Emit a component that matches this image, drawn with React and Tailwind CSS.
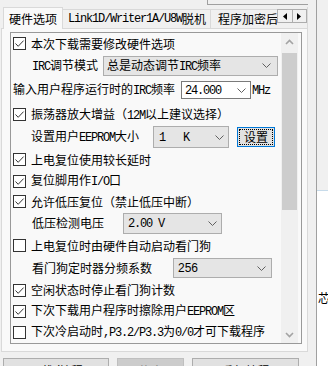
import React from 'react';

const cjk = "font-['Noto_Sans_CJK_SC',sans-serif]";

function L({ children }) {
  return <span className="font-['Liberation_Mono',monospace] tracking-[-1.2px]">{children}</span>;
}

function Check({ checked }) {
  return (
    <span className="flex h-[13px] w-[13px] shrink-0 items-center justify-center border border-[#333333] bg-white">
      {checked ? (
        <svg width="11" height="11" viewBox="0 0 11 11">
          <path d="M1.5 5.5 L4.2 8.3 L9.6 2.6" fill="none" stroke="#333333" strokeWidth="1" />
        </svg>
      ) : null}
    </span>
  );
}

function Chevron({ color = '#606060' }) {
  return (
    <svg width="9" height="5" viewBox="0 0 9 5" className="shrink-0">
      <path d="M0.5 0.5 L4.5 4.5 L8.5 0.5" fill="none" stroke={color} strokeWidth="1" />
    </svg>
  );
}

function CheckRow({ h, checked, children }) {
  return (
    <div className={`flex shrink-0 items-center gap-[5px] pl-[2px] ${h}`}>
      <Check checked={checked} />
      <span className="whitespace-nowrap leading-[14px]">{children}</span>
    </div>
  );
}

function Scrollbar() {
  return (
    <div className="flex w-[17px] shrink-0 flex-col bg-[#f0f0f0]">
      <div className="flex h-[17px] shrink-0 items-center justify-center">
        <svg width="9" height="6" viewBox="0 0 9 6">
          <path d="M1 5 L4.5 1.5 L8 5" fill="none" stroke="#a3a3a3" strokeWidth="1.6" />
        </svg>
      </div>
      <div className="mx-[1px] mt-[3px] h-[157px] shrink-0 bg-[#cdcdcd]" />
      <div className="flex-1" />
      <div className="flex h-[17px] shrink-0 items-center justify-center">
        <svg width="9" height="6" viewBox="0 0 9 6">
          <path d="M1 1 L4.5 4.5 L8 1" fill="none" stroke="#a3a3a3" strokeWidth="1.6" />
        </svg>
      </div>
    </div>
  );
}

export default function App() {
  return (
    <div className={`flex h-[366px] w-[328px] overflow-hidden bg-[#f0f0f0] text-[12px] text-black ${cjk}`}>
      <div className="flex w-[308px] shrink-0 flex-col">
        <div className="h-[7px] shrink-0">
          <div className="ml-[207px] h-[5px] w-[101px] border-b border-l border-[#a0a0a0]" />
        </div>

        {/* tab headers */}
        <div className="flex h-[22px] shrink-0 items-end pl-[1px]">
          <div className="h-[1px] w-[2px] bg-[#d9d9d9]" />
          <div className="flex h-[22px] w-[60px] items-center justify-center border-x border-t border-[#d9d9d9] bg-[#f9f9f9] leading-[14px]">
            硬件选项
          </div>
          <div className="flex h-[20px] w-[214px] overflow-hidden border-b border-[#d9d9d9]">
            <div className="flex h-full w-[148px] shrink-0 items-center border-r border-t border-[#d9d9d9] pl-[5px] whitespace-nowrap leading-[14px]">
              <L>Link1D/Writer1A/U8W</L>脱机
            </div>
            <div className="flex h-full w-[70px] shrink-0 items-center border-r border-t border-[#d9d9d9] pl-[7px] whitespace-nowrap leading-[14px]">
              程序加密后
            </div>
          </div>
          <div className="flex h-[22px] w-[31px] flex-col border-b border-r border-[#d9d9d9]">
            <div className="mt-[2px] flex">
              <div className="flex h-[14px] w-[16px] items-center justify-center border border-[#adadad] bg-[#f0f0f0]">
                <svg width="4" height="7" viewBox="0 0 4 7"><path d="M4 0 L0 3.5 L4 7 Z" fill="#000" /></svg>
              </div>
              <div className="flex h-[14px] w-[15px] items-center justify-center border-y border-r border-[#adadad] bg-[#f0f0f0]">
                <svg width="4" height="7" viewBox="0 0 4 7"><path d="M0 0 L4 3.5 L0 7 Z" fill="#000" /></svg>
              </div>
            </div>
          </div>
        </div>

        {/* tab page */}
        <div className="ml-[1px] h-[323px] w-[307px] shrink-0 border-x border-b border-[#d9d9d9] bg-[#f9f9f9] pl-[8px] pt-[3px]">
          <div className="flex h-[312px] w-[292px] border border-[#999999]">
            <div className="flex w-[270px] shrink-0 flex-col">
              <CheckRow h="h-[21px]" checked>本次下载需要修改硬件选项</CheckRow>

              <div className="flex h-[23px] shrink-0 items-center pl-[21px]">
                <span className="w-[71px] shrink-0 whitespace-nowrap leading-[14px]">
                  <L>IRC</L>调节模式
                </span>
                <div className="flex h-[20px] w-[175px] items-center justify-between border border-[#adadad] bg-[#e5e5e5] pl-[3px] pr-[6px]">
                  <span className="whitespace-nowrap leading-[14px]">
                    总是动态调节<L>IRC</L>频率
                  </span>
                  <Chevron />
                </div>
              </div>

              <div className="flex h-[26px] shrink-0 items-center pl-[2px]">
                <span className="w-[168px] shrink-0 whitespace-nowrap leading-[14px]">
                  输入用户程序运行时的<L>IRC</L>频率
                </span>
                <div className="flex h-[18px] w-[70px] items-center justify-between border border-[#7a7a7a] bg-white pl-[3px] pr-[4px]">
                  <span className="leading-[14px]"><L>24.000</L></span>
                  <Chevron />
                </div>
                <span className="ml-[1px] leading-[14px]"><L>MHz</L></span>
              </div>

              <CheckRow h="h-[23px]" checked>
                振荡器放大增益（<L>12M</L>以上建议选择）
              </CheckRow>

              <div className="flex h-[22px] shrink-0 items-center pl-[20px]">
                <span className="w-[122px] shrink-0 whitespace-nowrap leading-[14px]">
                  设置用户<L>EEPROM</L>大小
                </span>
                <div className="flex h-[22px] w-[76px] items-center justify-between border border-[#adadad] bg-[#e5e5e5] pl-[5px] pr-[4px]">
                  <span className="whitespace-pre leading-[14px]"><L>1   K</L></span>
                  <Chevron />
                </div>
                <div className="ml-[8px] flex h-[20px] w-[38px] items-center justify-center border border-[#0078d7] bg-[#e1e1e1]">
                  <div className="flex h-[16px] w-[34px] items-center justify-center border border-dotted border-black leading-[14px]">
                    设置
                  </div>
                </div>
              </div>

              <CheckRow h="h-[23px]" checked>上电复位使用较长延时</CheckRow>
              <CheckRow h="h-[20px]" checked>复位脚用作<L>I/O</L>口</CheckRow>
              <CheckRow h="h-[21px]" checked>允许低压复位（禁止低压中断）</CheckRow>

              <div className="flex h-[22px] shrink-0 items-center pl-[21px]">
                <span className="w-[91px] shrink-0 whitespace-nowrap leading-[14px]">低压检测电压</span>
                <div className="flex h-[21px] w-[99px] items-center justify-between border border-[#adadad] bg-[#e5e5e5] pl-[4px] pr-[4px]">
                  <span className="whitespace-pre leading-[14px]"><L>2.00 V</L></span>
                  <Chevron />
                </div>
              </div>

              <CheckRow h="h-[23px]">上电复位时由硬件自动启动看门狗</CheckRow>

              <div className="flex h-[22px] shrink-0 items-center pl-[21px]">
                <span className="w-[141px] shrink-0 whitespace-nowrap leading-[14px]">看门狗定时器分频系数</span>
                <div className="flex h-[20px] w-[99px] items-center justify-between border border-[#adadad] bg-[#e5e5e5] pl-[4px] pr-[5px]">
                  <span className="font-['Liberation_Sans',sans-serif] leading-[14px]">256</span>
                  <Chevron />
                </div>
              </div>

              <CheckRow h="h-[22px]" checked>空闲状态时停止看门狗计数</CheckRow>
              <CheckRow h="h-[20px]" checked>下次下载用户程序时擦除用户<L>EEPROM</L>区</CheckRow>
              <CheckRow h="h-[22px]">
                下次冷启动时<L>,P3.2/P3.3</L>为<L>0/0</L>才可下载程序
              </CheckRow>
            </div>
            <Scrollbar />
            <div className="flex-1" />
          </div>
        </div>

        {/* bottom buttons */}
        <div className="mt-[6px] flex shrink-0 gap-[8px] pl-[3px]">
          <div className="flex h-[26px] w-[106px] items-center justify-center border border-[#adadad] bg-[#e1e1e1] leading-[14px]">
            下载<L>/</L>编程
          </div>
          <div className="flex h-[26px] w-[67px] items-center justify-center border border-[#bfbfbf] bg-[#cccccc] leading-[14px] text-[#838383]">
            停止
          </div>
          <div className="flex h-[26px] w-[107px] items-center justify-center border border-[#adadad] bg-[#e1e1e1] leading-[14px]">
            重复编程
          </div>
        </div>
      </div>

      {/* right neighbour panel, cut off */}
      <div className="flex w-[20px] shrink-0">
        <div className="w-[8px] shrink-0" />
        <div className="flex w-[12px] flex-col border-l border-[#a0a0a0]">
          <div className="h-[190px] shrink-0" />
          <div className="flex-1 border-t border-[#c7dbea] bg-white pl-[1px] pt-[100px] leading-[14px]">芯</div>
        </div>
      </div>
    </div>
  );
}
